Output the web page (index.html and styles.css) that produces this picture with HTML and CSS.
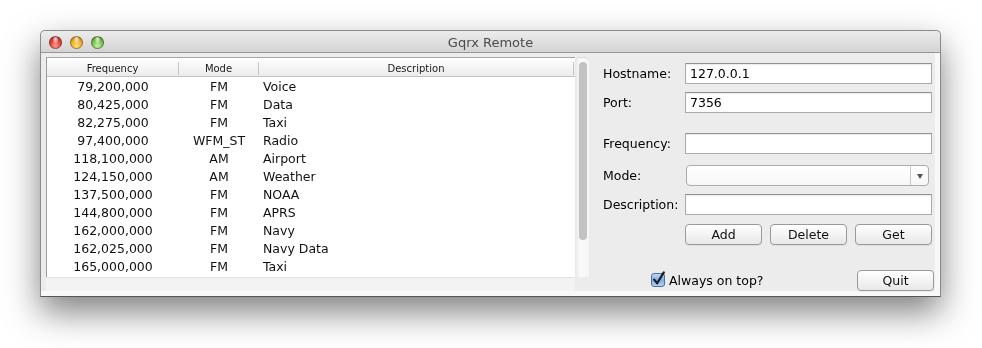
FILE: index.html
```html
<!DOCTYPE html>
<html lang="en">

<head>
    <meta charset="UTF-8">
    <title>Gqrx Remote</title>
    <link rel="stylesheet" href="styles.css">
</head>

<body>
    <div class="window">
        <!-- Title bar -->
        <div class="titlebar">
            <div class="lights">
                <span class="light red"></span>
                <span class="light yellow"></span>
                <span class="light green"></span>
            </div>
            <div class="title">Gqrx Remote</div>
            <div></div>
        </div>

        <div class="content">
            <!-- Frequency list -->
            <div class="list">
                <div class="list-main">
                    <div class="table">
                        <div class="thead">
                            <div class="th col-freq">Frequency</div>
                            <div class="th col-mode">Mode</div>
                            <div class="th col-desc">Description</div>
                        </div>
                        <div class="row"><div class="col-freq">79,200,000</div><div class="col-mode">FM</div><div class="col-desc">Voice</div></div>
                        <div class="row"><div class="col-freq">80,425,000</div><div class="col-mode">FM</div><div class="col-desc">Data</div></div>
                        <div class="row"><div class="col-freq">82,275,000</div><div class="col-mode">FM</div><div class="col-desc">Taxi</div></div>
                        <div class="row"><div class="col-freq">97,400,000</div><div class="col-mode">WFM_ST</div><div class="col-desc">Radio</div></div>
                        <div class="row"><div class="col-freq">118,100,000</div><div class="col-mode">AM</div><div class="col-desc">Airport</div></div>
                        <div class="row"><div class="col-freq">124,150,000</div><div class="col-mode">AM</div><div class="col-desc">Weather</div></div>
                        <div class="row"><div class="col-freq">137,500,000</div><div class="col-mode">FM</div><div class="col-desc">NOAA</div></div>
                        <div class="row"><div class="col-freq">144,800,000</div><div class="col-mode">FM</div><div class="col-desc">APRS</div></div>
                        <div class="row"><div class="col-freq">162,000,000</div><div class="col-mode">FM</div><div class="col-desc">Navy</div></div>
                        <div class="row"><div class="col-freq">162,025,000</div><div class="col-mode">FM</div><div class="col-desc">Navy Data</div></div>
                        <div class="row"><div class="col-freq">165,000,000</div><div class="col-mode">FM</div><div class="col-desc">Taxi</div></div>
                    </div>
                    <div class="vscroll"><div class="thumb"></div></div>
                </div>
                <div class="hscroll"></div>
            </div>

            <!-- Controls -->
            <div class="form">
                <div class="field">
                    <label>Hostname:</label>
                    <input class="text-input" type="text" value="127.0.0.1">
                </div>
                <div class="field field-gap">
                    <label>Port:</label>
                    <input class="text-input" type="text" value="7356">
                </div>
                <div class="field field-freq">
                    <label>Frequency:</label>
                    <input class="text-input" type="text" value="">
                </div>
                <div class="field">
                    <label>Mode:</label>
                    <div class="combo">
                        <div class="combo-value"></div>
                        <div class="combo-arrow"><span class="triangle"></span></div>
                    </div>
                </div>
                <div class="field field-desc">
                    <label>Description:</label>
                    <input class="text-input" type="text" value="">
                </div>
                <div class="buttons">
                    <button>Add</button>
                    <button>Delete</button>
                    <button>Get</button>
                </div>
                <div class="bottom-row">
                    <label class="check">
                        <svg width="16" height="17" viewBox="0 0 16 17">
                            <defs>
                                <linearGradient id="cb" x1="0" y1="0" x2="0" y2="1">
                                    <stop offset="0" stop-color="#c4dcf5"/>
                                    <stop offset="0.5" stop-color="#7eaee4"/>
                                    <stop offset="1" stop-color="#b3d3f4"/>
                                </linearGradient>
                            </defs>
                            <rect x="0.5" y="2.5" width="13" height="13" rx="2.5" fill="url(#cb)" stroke="#4c6f9f"/>
                            <path d="M3.2 8.6 L6.2 12.3 L12.8 1.4" fill="none" stroke="#1c1c1c" stroke-width="2.2" stroke-linecap="round" stroke-linejoin="round"/>
                        </svg>
                        <span>Always on top?</span>
                    </label>
                    <button class="quit">Quit</button>
                </div>
            </div>
        </div>
    </div>
</body>

</html>
```

FILE: styles.css
```css
/* Page */
html {
    background: #FFFFFF;
}

body {
    box-sizing: border-box;
    min-height: 348px;
    margin: 0;
    padding: 30px 0 0 40px;
    font-family: "DejaVu Sans", sans-serif;
    color: #000000;
}

/* Window frame */
.window {
    width: 899px;
    height: 265px;
    border: 1px solid #8A8A8A;
    border-bottom-color: #555555;
    border-radius: 5px 5px 0 0;
    filter: drop-shadow(0 15px 17px rgba(0, 0, 0, 0.5));
    display: flex;
    flex-direction: column;
}

.titlebar {
    flex-shrink: 0;
    height: 21px;
    border-bottom: 1px solid #979797;
    border-radius: 5px 5px 0 0;
    background: linear-gradient(#ECECEC, #D4D4D4);
    display: grid;
    grid-template-columns: 1fr auto 1fr;
    align-items: center;
}

.lights {
    display: flex;
    gap: 8px;
    padding: 2px 0 0 8px;
}

.light {
    width: 13px;
    height: 13px;
    border-radius: 50%;
    box-sizing: border-box;
    border: 1px solid rgba(0, 0, 0, 0.35);
}

.red {
    background:
        radial-gradient(ellipse at 50% 22%, rgba(255, 255, 255, 0.85) 0, rgba(255, 255, 255, 0) 40%),
        radial-gradient(circle at 50% 80%, #FF9A8F 0, #E2453D 50%, #B02620 100%);
}

.yellow {
    background:
        radial-gradient(ellipse at 50% 22%, rgba(255, 255, 255, 0.85) 0, rgba(255, 255, 255, 0) 40%),
        radial-gradient(circle at 50% 80%, #FFE27A 0, #F2AE28 50%, #BF7F0C 100%);
}

.green {
    background:
        radial-gradient(ellipse at 50% 22%, rgba(255, 255, 255, 0.85) 0, rgba(255, 255, 255, 0) 40%),
        radial-gradient(circle at 50% 80%, #C8F2A2 0, #7CC04E 50%, #47892A 100%);
}

.title {
    font-size: 13px;
    color: #4A4A4A;
    padding-top: 2px;
}

/* Content area */
.content {
    flex: 1;
    min-height: 0;
    display: flex;
    background: #ECECEC;
    border-right: 5px solid #F8F8F8;
    border-bottom: 5px solid #F8F8F8;
    padding: 4px 0 0 5px;
}

.list {
    width: 543px;
    display: flex;
    flex-direction: column;
}

.list-main {
    height: 220px;
    display: flex;
}

.table {
    width: 528px;
    border-left: 1px solid #9C9C9C;
    border-top: 1px solid #A6A6A6;
    background: #FFFFFF;
    font-size: 12.5px;
    color: #111111;
}

.thead {
    height: 18px;
    border-bottom: 1px solid #C2C2C2;
    background: linear-gradient(#FFFFFF, #ECECEC);
    display: flex;
}

.th {
    box-sizing: border-box;
    height: 13px;
    margin-top: 4px;
    border-right: 1px solid #C4C4C4;
    font-size: 10px;
    line-height: 13px;
    color: #1A1A1A;
    text-align: center !important;
    padding-left: 0 !important;
}

.row {
    display: flex;
    box-sizing: border-box;
    height: 18px;
    padding-top: 1px;
    line-height: 18px;
}

.col-freq {
    box-sizing: border-box;
    width: 132px;
    text-align: center;
}

.col-mode {
    box-sizing: border-box;
    width: 80px;
    text-align: center;
}

.col-desc {
    box-sizing: border-box;
    width: 315px;
    padding-left: 4px;
}

.vscroll {
    width: 14px;
    border-top: 1px solid #D8D8D8;
    border-radius: 5px 5px 0 0;
    background: linear-gradient(to right, #E6E6E6, #FAFAFA 35%, #F6F6F6);
}

.thumb {
    width: 8px;
    height: 178px;
    margin: 4px 0 0 4px;
    border-radius: 4px;
    background: #C2C2C2;
}

.hscroll {
    width: 529px;
    height: 13px;
    border-top: 1px solid #E2E2E2;
    background: #F3F3F3;
}

/* Controls panel */
.form {
    flex: 1;
    padding: 6px 3px 0 14px;
    display: flex;
    flex-direction: column;
    font-size: 12.5px;
}

.field {
    display: flex;
    align-items: center;
    height: 21px;
    margin-bottom: 8px;
}

.field-gap {
    margin-bottom: 20px;
}

.field-freq {
    margin-bottom: 11px;
}

.field-desc {
    margin-bottom: 9px;
}

.field label {
    width: 82px;
}

.text-input {
    box-sizing: border-box;
    width: 247px;
    height: 21px;
    margin: 0;
    padding: 0 4px;
    border: 1px solid #ABABAB;
    border-top-color: #929292;
    border-radius: 0;
    background: #FFFFFF;
    box-shadow: inset 0 1px 1px rgba(0, 0, 0, 0.08);
    font-family: "DejaVu Sans", sans-serif;
    font-size: 12.5px;
    color: #000000;
    outline: none;
}

.combo {
    box-sizing: border-box;
    width: 243px;
    height: 21px;
    margin-left: 1px;
    border: 1px solid #ABABAB;
    border-radius: 4px;
    background: linear-gradient(#FFFFFF, #F7F7F7);
    display: flex;
}

.combo-value {
    flex: 1;
}

.combo-arrow {
    width: 17px;
    border-left: 1px solid #C9C9C9;
    display: flex;
    align-items: center;
    justify-content: center;
}

.triangle {
    width: 0;
    height: 0;
    border-left: 3.5px solid transparent;
    border-right: 3.5px solid transparent;
    border-top: 5px solid #555555;
    margin-top: 1px;
}

.buttons {
    display: flex;
    gap: 8px;
    margin-left: 82px;
}

button {
    box-sizing: border-box;
    width: 77px;
    height: 21px;
    padding: 0;
    border: 1px solid #9A9A9A;
    border-radius: 4px;
    background: linear-gradient(#FFFFFF, #F3F3F3 50%, #E8E8E8);
    box-shadow: 0 1px 0 rgba(0, 0, 0, 0.06);
    font-family: "DejaVu Sans", sans-serif;
    font-size: 12.5px;
    color: #111111;
}

.bottom-row {
    display: flex;
    align-items: center;
    margin-top: 25px;
    margin-right: -2px;
}

.check {
    display: flex;
    align-items: center;
    gap: 2px;
    margin-left: 48px;
}

.check svg {
    margin-top: -3px;
}

.quit {
    margin-left: auto;
}
```
